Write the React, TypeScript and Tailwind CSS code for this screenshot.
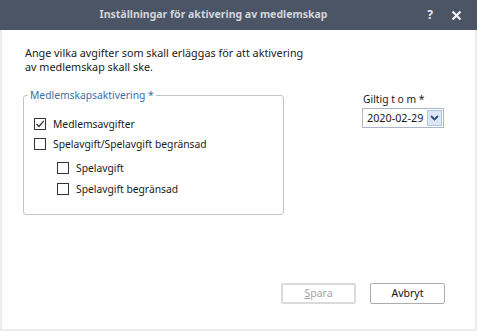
import React from "react";

const font = { fontFamily: '"Noto Sans", "Open Sans", sans-serif' };

function Box({ checked }: { checked?: boolean }) {
  return (
    <span className="w-[12px] h-[12px] border border-[#333333] bg-white flex items-center justify-center shrink-0">
      {checked && (
        <svg width="10" height="10" viewBox="0 0 10 10">
          <polyline points="1.5,5 4,7.5 8.8,1.8" fill="none" stroke="#333" strokeWidth="1.2" />
        </svg>
      )}
    </span>
  );
}

function Row({ label, checked, indent, className }: { label: string; checked?: boolean; indent?: boolean; className?: string }) {
  return (
    <div className={`h-[20px] flex items-center gap-[7px] ${indent ? "pl-[23px]" : ""} ${className ?? ""}`}>
      <Box checked={checked} />
      <span className="text-[10.3px] text-[#1a1a1a] leading-none">{label}</span>
    </div>
  );
}

export default function App() {
  return (
    <div className="w-[477px] h-[331px] flex flex-col bg-white" style={font}>
      <div className="h-[30px] bg-[#4b5566] flex items-center shrink-0">
        <div className="flex-1 text-center pl-[4px] text-[10.5px] font-bold text-[#d2d6dc]">
          Inställningar för aktivering av medlemskap
        </div>
        <span className="w-[14px] text-center text-[12px] font-bold text-[#e8eaee] mr-[14px]">?</span>
        <svg width="11" height="11" viewBox="0 0 11 11" className="mr-[15px]">
          <path d="M1.5 1.5 L9.5 9.5 M9.5 1.5 L1.5 9.5" stroke="#f2f3f5" strokeWidth="2.2" />
        </svg>
      </div>
      <div className="flex-1 flex flex-col border-x-2 border-b-2 border-[#ececec] pl-[21px] pt-[16px]">
        <p className="ml-[2px] text-[10.8px] leading-[14px] text-[#1a1a1a]">
          Ange vilka avgifter som skall erläggas för att aktivering
          <br />
          av medlemskap skall ske.
        </p>
        <div className="flex mt-[15px]">
          <fieldset className="w-[261px] border border-[#c4c4c4] rounded-[3px] pl-[10px] pb-[15px]">
            <legend className="ml-[-6px] px-[2px] text-[10.3px] leading-[13px] text-[#3c6ea8]">
              Medlemskapsaktivering *
            </legend>
            <Row className="mt-[12px]" label="Medlemsavgifter" checked />
            <Row label="Spelavgift/Spelavgift begränsad" />
            <Row className="mt-[4px]" indent label="Spelavgift" />
            <Row className="mt-[1px]" indent label="Spelavgift begränsad" />
          </fieldset>
          <div className="ml-[78px] pt-[4px] flex flex-col">
            <span className="ml-[1px] text-[10.3px] leading-[13px] text-[#1a1a1a]">Giltig t o m *</span>
            <div className="mt-[2px] w-[82px] h-[20px] border border-[#a9b8cc] bg-white flex items-center">
              <span className="flex-1 pl-[4px] text-[10.8px] text-[#1a1a1a] leading-none">2020-02-29</span>
              <span className="w-[15px] h-[16px] mr-[1px] bg-[#dbe7f5] border border-[#b3c5dc] flex items-center justify-center">
                <svg width="9" height="6" viewBox="0 0 9 6">
                  <polyline points="1,1 4.5,4.5 8,1" fill="none" stroke="#2c4d7e" strokeWidth="1.8" />
                </svg>
              </span>
            </div>
          </div>
        </div>
        <div className="mt-auto mb-[25px] mr-[30px] flex justify-end gap-[14px]">
          <button className="w-[75px] h-[21px] border-2 border-[#dadada] rounded-[2px] bg-white text-[10.5px] text-[#a3a3a3] leading-none">
            <span className="underline">S</span>para
          </button>
          <button className="w-[75px] h-[21px] border border-[#adadad] rounded-[2px] bg-white text-[10.5px] text-[#111] leading-none">
            Avbryt
          </button>
        </div>
      </div>
    </div>
  );
}
